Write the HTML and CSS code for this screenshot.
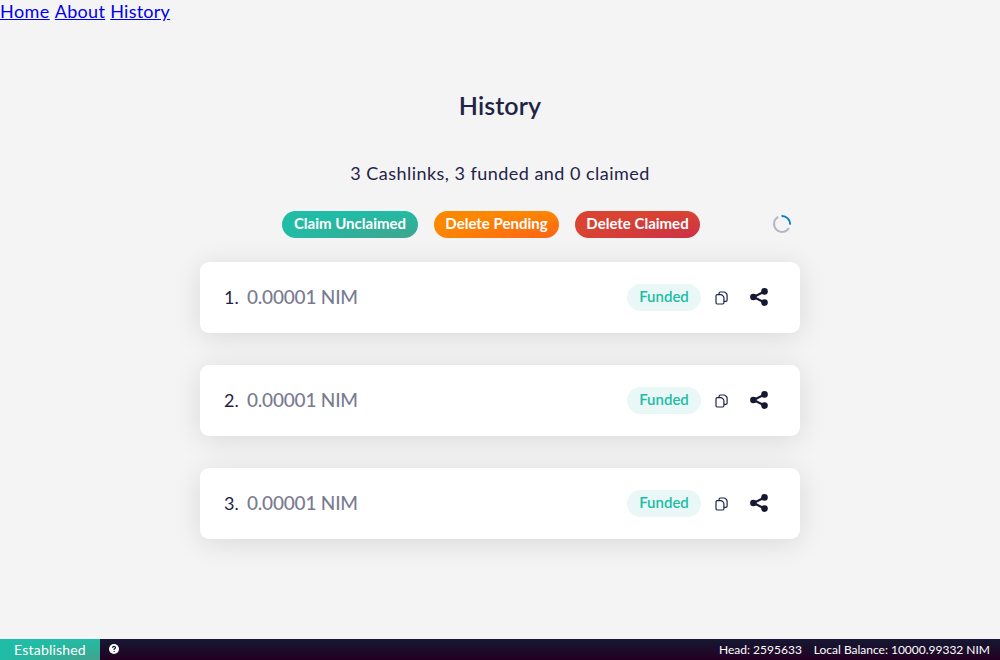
FILE: index.html
```html
<!DOCTYPE html>
<html lang="en">
<head>
<meta charset="utf-8">
<title>History</title>
<link rel="stylesheet" href="styles.css">
</head>
<body>
<svg class="symbols" aria-hidden="true">
  <symbol id="copy" viewBox="0 0 13 14">
    <path d="M4.1 3.4V2.2Q4.1 1 5.3 1H8.9Q10 1 10.7 1.8L11.4 2.5Q12.1 3.2 12.1 4.2V9Q12.1 10.4 10.8 10.4H9.2M2.2 3.7H5.8Q6.8 3.7 7.5 4.4L8.2 5.1Q8.9 5.8 8.9 6.8V11.8Q8.9 13 7.7 13H2.2Q1 13 1 11.8V4.9Q1 3.7 2.2 3.7Z" fill="none" stroke="currentColor" stroke-width="1.2" stroke-linejoin="round"/>
  </symbol>
  <symbol id="share" viewBox="0 0 18 18">
    <path d="M14.5 3.5L3.5 9L14.5 14.5" fill="none" stroke="currentColor" stroke-width="2.1"/>
    <circle cx="3.4" cy="9" r="3.3" fill="currentColor"/><circle cx="14.5" cy="3.4" r="3.3" fill="currentColor"/><circle cx="14.5" cy="14.6" r="3.3" fill="currentColor"/>
  </symbol>
</svg>
<div class="page">
  <nav class="nav"><a class="nav-home" href="#">Home</a><a class="nav-about" href="#">About</a><a class="nav-history" href="#">History</a></nav>
  <main class="main">
    <h1 class="title">History</h1>
    <p class="summary">3 Cashlinks, 3 funded and 0 claimed</p>
    <div class="actions">
      <button class="pill green">Claim Unclaimed</button>
      <button class="pill orange">Delete Pending</button>
      <button class="pill red">Delete Claimed</button>
      <svg class="spinner" viewBox="0 0 20 20"><path d="M6.2 2.9A8 8 0 1 0 16.9 14" stroke="#b5b5c4"/><path d="M9.5 2A8 8 0 0 1 18 10.6" stroke="#0582ca"/></svg>
    </div>
    <ol class="list">
      <li class="card"><span class="num">1.</span><span class="amount">0.00001 NIM</span><span class="status">Funded</span><svg class="copy"><use href="#copy"/></svg><svg class="share"><use href="#share"/></svg></li>
      <li class="card"><span class="num">2.</span><span class="amount">0.00001 NIM</span><span class="status">Funded</span><svg class="copy"><use href="#copy"/></svg><svg class="share"><use href="#share"/></svg></li>
      <li class="card"><span class="num">3.</span><span class="amount">0.00001 NIM</span><span class="status">Funded</span><svg class="copy"><use href="#copy"/></svg><svg class="share"><use href="#share"/></svg></li>
    </ol>
  </main>
  <footer class="footer">
    <span class="network">Established</span>
    <svg class="help" viewBox="0 0 10 10"><circle cx="5" cy="5" r="5" fill="#fff"/><path d="M3.5 3.8Q3.7 2.3 5 2.3Q6.5 2.3 6.5 3.6Q6.5 4.5 5.1 5.1V5.9M5.1 6.9V8" fill="none" stroke="#151833" stroke-width="1.2"/></svg>
    <span class="head">Head: 2595633</span><span class="balance">Local Balance: 10000.99332 NIM</span>
  </footer>
</div>
</body>
</html>
```
FILE: styles.css
```css
* { box-sizing: border-box; }
body { margin: 0; background: #f4f4f4; color: #1f2348; font-family: Lato, "Open Sans", sans-serif; overflow: hidden; }
.symbols { display: none; }
.page { height: 660px; display: flex; flex-direction: column; }
.nav { display: flex; gap: 5px; height: 24px; font-size: 18px; line-height: 22px; }
.nav a { color: #0000ee; }
.nav-home { letter-spacing: .45px; }
.nav-about { letter-spacing: .3px; }
.nav-history { letter-spacing: .25px; }
.main { width: 600px; margin: 0 auto; flex: 1; }
.title { margin: 64px 0 0; font-size: 25px; line-height: 34px; text-align: center; font-weight: 600; letter-spacing: .1px; }
.summary { margin: 39px 0 0; font-size: 18px; line-height: 24px; text-align: center; letter-spacing: .47px; }
.actions { display: flex; gap: 16px; margin-top: 26px; padding-left: 82px; height: 27px; }
.pill { border: 0; border-radius: 14px; padding: 0 0 2px; height: 27px; color: #fff; font: 700 15px/25px Lato, sans-serif; text-align: center; }
.green { width: 136px; background: radial-gradient(100% 100% at 100% 100%, #41a38e, #21bca5); }
.orange { width: 125px; background: radial-gradient(100% 100% at 100% 100%, #fd6216, #fc8702); }
.red { width: 125px; background: radial-gradient(100% 100% at 100% 100%, #cc3047, #d94432); }
.spinner { width: 20px; height: 20px; margin: 3px 0 0 56px; fill: none; stroke-width: 1.9; }
.list { list-style: none; margin: 24px 0 0; padding: 0; display: grid; gap: 32px; }
.card { display: flex; align-items: center; height: 71px; padding: 0 32px 2px 24px; border-radius: 9px; background: #fff; box-shadow: 0 4px 28px rgba(0,0,0,.11); }
.num { width: 23px; font-size: 18px; color: #1f2348; }
.amount { font-size: 19px; font-weight: 500; color: #797b91; letter-spacing: -.2px; }
.status { width: 74px; height: 27px; margin: 2px 0 0 auto; border-radius: 14px; background: #e9f8f6; color: #21bca5; font: 600 15px/25px Lato, sans-serif; text-align: center; }
.copy { width: 13px; height: 14px; margin: 2px 22px 0 14px; color: #1f2348; }
.share { width: 18px; height: 18px; color: #151833; }
.footer { display: flex; align-items: center; height: 21px; padding-right: 10px; color: #fff; font-size: 12px; background: linear-gradient(#151833, #220023); }
.network { width: 100px; height: 21px; text-align: center; font-size: 14px; line-height: 21px; letter-spacing: .2px; background: radial-gradient(100% 100% at 100% 100%, #41a38e, #21bca5); }
.help { width: 10px; height: 10px; margin: 0 0 1px 9px; }
.head { margin-left: auto; }
.balance { margin-left: 12px; letter-spacing: -.01px; }
```
